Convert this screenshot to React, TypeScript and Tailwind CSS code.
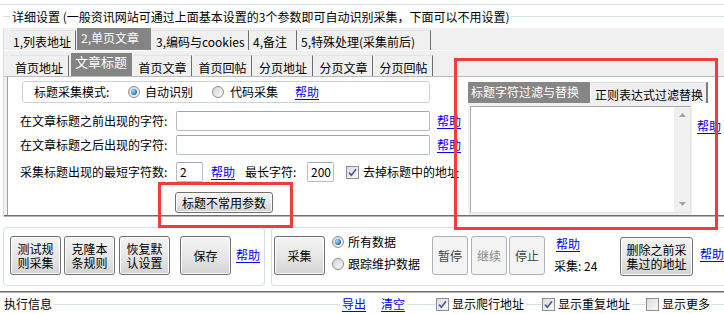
import React from "react";

function Link({ children, className = "" }: { children: React.ReactNode; className?: string }) {
  return <span className={`whitespace-nowrap text-[#0000ff] underline underline-offset-[2px] ${className}`}>{children}</span>;
}

function Btn({ children, className = "" }: { children: React.ReactNode; className?: string }) {
  return (
    <div
      className={`flex shrink-0 items-center justify-center rounded-[3px] border border-[#707070] bg-linear-to-b from-[#f4f4f4] via-[#e8e8e8] to-[#d3d3d3] text-center leading-[14px] shadow-[inset_0_0_0_1px_#fcfcfc] ${className}`}
    >
      {children}
    </div>
  );
}

function DimBtn({ children, className = "" }: { children: React.ReactNode; className?: string }) {
  return (
    <div
      className={`flex shrink-0 items-center justify-center rounded-[3px] border border-[#adb2b5] bg-[#f4f4f4] text-center ${className}`}
    >
      {children}
    </div>
  );
}

function Radio({ on }: { on?: boolean }) {
  return (
    <div className="flex h-[12px] w-[12px] shrink-0 items-center justify-center rounded-full border border-[#8e8f8f] bg-linear-to-br from-[#d4d4d4] to-[#fbfbfb]">
      {on && <div className="h-[6px] w-[6px] rounded-full bg-[radial-gradient(circle_at_35%_35%,#a8e0ff,#1a6fb7_70%)]" />}
    </div>
  );
}

function Check({ on }: { on?: boolean }) {
  return (
    <div className="flex h-[13px] w-[13px] shrink-0 items-center justify-center border border-[#8e8f8f] bg-linear-to-br from-[#dcdcdc] to-[#fafafa]">
      {on && (
        <svg width="9" height="9" viewBox="0 0 9 9">
          <path d="M1 4.6 L3.4 7.2 L8 1.2" stroke="#4a5f97" strokeWidth="1.7" fill="none" />
        </svg>
      )}
    </div>
  );
}

function Input({ className = "", children }: { className?: string; children?: React.ReactNode }) {
  return (
    <div
      className={`flex shrink-0 items-center rounded-[2px] border border-[#b4bcc6] border-t-[#9ba6b2] bg-white pl-[3px] ${className}`}
    >
      {children}
    </div>
  );
}

function Line({ className = "" }: { className?: string }) {
  return <div className={`h-px bg-[#d5dfe5] ${className}`} />;
}

export default function App() {
  return (
    <div className="relative h-[314px] w-[724px] overflow-hidden bg-white font-['Noto_Sans_CJK_SC','Noto_Sans',sans-serif] text-[12px] leading-[14px] text-black">
      {/* top edge */}
      <div className="h-[5px] border-b border-[#dbe1e8]" />

      {/* group title */}
      <div className="flex h-[23px] items-center">
        <Line className="ml-[3px] w-[7px]" />
        <span className="whitespace-nowrap px-[2px]">
          详细设置 (一般资讯网站可通过上面基本设置的3个参数即可自动识别采集，下面可以不用设置)
        </span>
        <Line className="flex-1" />
      </div>

      {/* body */}
      <div className="ml-[3px] border-l border-[#d5dfe5]">
        {/* outer tabs */}
        <div className="flex h-[23px] items-end border-b border-white bg-[#f0f0f0] pl-[6px]">
          <div className="flex h-[20px] w-[66px] items-center whitespace-nowrap border-r border-t border-r-[#6d6d6d] border-t-[#e3e3e3] pl-[3px] pt-[3px]">1,列表地址</div>
          <div className="ml-px flex h-[22px] w-[74px] items-start whitespace-nowrap bg-[#848484] pl-[4px] pt-[3px] text-white">2,单页文章</div>
          <div className="ml-px flex h-[20px] w-[97px] items-center whitespace-nowrap border-r border-t border-r-[#6d6d6d] border-t-[#e3e3e3] pl-[4px] pt-[3px]">3,编码与cookies</div>
          <div className="ml-px flex h-[20px] w-[47px] items-center whitespace-nowrap border-r border-t border-r-[#6d6d6d] border-t-[#e3e3e3] pl-[3px] pt-[3px]">4,备注</div>
          <div className="ml-px flex h-[20px] w-[133px] items-center whitespace-nowrap border-r border-t border-r-[#6d6d6d] border-t-[#e3e3e3] pl-[3px] pt-[3px]">5,特殊处理(采集前后)</div>
        </div>

        {/* inner tabs */}
        <div className="flex h-[26px] items-end border-b border-[#b9b9b9] bg-[#f0f0f0] pl-[6px]">
          <div className="flex h-[21px] w-[59px] items-center justify-center border-r border-t border-r-[#6d6d6d] border-t-[#e3e3e3] pt-[3px]">首页地址</div>
          <div className="ml-[2px] flex h-[23px] w-[61px] items-start bg-[#848484] pl-[4px] pt-[2px] text-[13px] text-white">文章标题</div>
          <div className="ml-[2px] flex h-[21px] w-[58px] items-center justify-center border-r border-t border-r-[#6d6d6d] border-t-[#e3e3e3] pt-[3px]">首页文章</div>
          <div className="ml-[2px] flex h-[21px] w-[58px] items-center justify-center border-r border-t border-r-[#6d6d6d] border-t-[#e3e3e3] pt-[3px]">首页回帖</div>
          <div className="ml-[2px] flex h-[21px] w-[59px] items-center justify-center border-r border-t border-r-[#6d6d6d] border-t-[#e3e3e3] pt-[3px]">分页地址</div>
          <div className="ml-[2px] flex h-[21px] w-[58px] items-center justify-center border-r border-t border-r-[#6d6d6d] border-t-[#e3e3e3] pt-[3px]">分页文章</div>
          <div className="ml-[2px] flex h-[21px] w-[58px] items-center justify-center border-r border-t border-r-[#6d6d6d] border-t-[#e3e3e3] pt-[3px]">分页回帖</div>
        </div>

        {/* content */}
        <div className="flex h-[138px] bg-[#f0f0f0] pl-[3px]">
          <div className="flex flex-1 border-l border-[#a0a0a0] bg-white">
            {/* left column */}
            <div className="flex w-[460px] shrink-0 flex-col">
              <div className="ml-[14px] mt-[4px] flex h-[22px] w-[408px] items-center rounded-[3px] border border-[#cdd2d8] pl-[11px]">
                <span className="w-[94px] shrink-0">标题采集模式:</span>
                <Radio on />
                <span className="ml-[5px]">自动识别</span>
                <div className="ml-[19px]">
                  <Radio />
                </div>
                <span className="ml-[6px]">代码采集</span>
                <Link className="ml-[17px]">帮助</Link>
              </div>

              <div className="ml-[12px] mt-[8px] flex h-[20px] items-center">
                <span className="w-[156px] shrink-0 whitespace-nowrap">在文章标题之前出现的字符:</span>
                <Input className="h-[20px] w-[254px]" />
                <Link className="ml-[7px]">帮助</Link>
              </div>
              <div className="ml-[12px] mt-[4px] flex h-[20px] items-center">
                <span className="w-[156px] shrink-0 whitespace-nowrap">在文章标题之后出现的字符:</span>
                <Input className="h-[20px] w-[254px]" />
                <Link className="ml-[7px]">帮助</Link>
              </div>
              <div className="ml-[12px] mt-[7px] flex h-[20px] items-center">
                <span className="w-[156px] shrink-0 whitespace-nowrap">采集标题出现的最短字符数:</span>
                <Input className="h-[20px] w-[27px]">2</Input>
                <Link className="ml-[8px]">帮助</Link>
                <span className="ml-[10px] w-[62px] shrink-0">最长字符:</span>
                <Input className="h-[20px] w-[27px]">200</Input>
                <div className="ml-[12px]">
                  <Check on />
                </div>
                <span className="ml-[4px] whitespace-nowrap">去掉标题中的地址</span>
              </div>
              <div className="ml-[167px] mt-[10px] flex">
                <Btn className="h-[21px] w-[98px]">标题不常用参数</Btn>
              </div>
            </div>

            {/* right column */}
            <div className="flex flex-col pt-[5px]">
              <div className="flex h-[21px] w-max">
                <div className="flex w-[122px] items-start whitespace-nowrap bg-[#868686] pl-[3px] pt-[3px] text-white">标题字符过滤与替换</div>
                <div className="ml-px flex w-[117px] items-center whitespace-nowrap border-r-2 border-t border-r-[#7a7a7a] border-t-[#dcdcdc] bg-[#f0f0f0] pl-[4px] pt-[4px]">正则表达式过滤替换</div>
              </div>
              <div className="flex">
                <div className="h-[112px] w-[224px] shrink-0 bg-[#f0f0f0] pb-[2px] pl-[2px] pr-[1px] pt-[3px]">
                  <div className="flex h-full justify-end border border-[#a9a9a9] border-b-[#e4e4e4] border-r-[#e4e4e4] bg-white">
                    <div className="flex w-[16px] flex-col items-center justify-between bg-[#f0f0f0] py-[6px]">
                      <svg width="7" height="4" viewBox="0 0 7 4">
                        <path d="M0 4 L3.5 0 L7 4 Z" fill="#a3a3a3" />
                      </svg>
                      <svg width="7" height="4" viewBox="0 0 7 4">
                        <path d="M0 0 L3.5 4 L7 0 Z" fill="#a3a3a3" />
                      </svg>
                    </div>
                  </div>
                </div>
                <Link className="ml-[5px] mt-[16px]">帮助</Link>
              </div>
            </div>
          </div>
        </div>
        <div className="h-px bg-[#6f6f6f]" />
        <div className="h-px bg-[#b5b5b5]" />
      </div>

      {/* bottom groups */}
      <div className="mt-[10px] flex h-[59px]">
        <div className="ml-[3px] flex w-[262px] shrink-0 items-start rounded-[4px] border border-[#d5dfe5] pl-[6px] pt-[8px]">
          <Btn className="h-[39px] w-[51px]">
            测试规
            <br />
            则采集
          </Btn>
          <Btn className="ml-[3px] h-[39px] w-[51px]">
            克隆本
            <br />
            条规则
          </Btn>
          <Btn className="ml-[4px] h-[39px] w-[51px]">
            恢复默
            <br />
            认设置
          </Btn>
          <Btn className="ml-[10px] h-[39px] w-[51px]">保存</Btn>
          <Link className="ml-[5px] mt-[12px]">帮助</Link>
        </div>
        <div className="ml-[6px] flex flex-1 items-start rounded-l-[4px] border border-r-0 border-[#d5dfe5] pl-[2px] pt-[8px]">
          <Btn className="h-[39px] w-[51px]">采集</Btn>
          <div className="ml-[7px] mt-[-1px] flex w-[100px] flex-col gap-[8px]">
            <div className="flex h-[14px] items-center">
              <Radio on />
              <span className="ml-[4px]">所有数据</span>
            </div>
            <div className="flex h-[14px] items-center">
              <Radio />
              <span className="ml-[4px]">跟踪维护数据</span>
            </div>
          </div>
          <DimBtn className="h-[39px] w-[36px] text-[#444]">暂停</DimBtn>
          <DimBtn className="ml-[3px] h-[39px] w-[36px] text-[#8a8a8a]">继续</DimBtn>
          <DimBtn className="ml-[2px] h-[39px] w-[36px] text-[#444]">停止</DimBtn>
          <div className="ml-[9px] flex w-[66px] flex-col">
            <Link className="ml-[2px] mt-[1px]">帮助</Link>
            <span className="mt-[8px] whitespace-nowrap">采集: 24</span>
          </div>
          <Btn className="mt-[1px] h-[39px] w-[73px] border-[#555]">
            删除之前采
            <br />
            集过的地址
          </Btn>
          <Link className="ml-[7px] mt-[11px]">帮助</Link>
        </div>
      </div>

      {/* splitter */}
      <div className="mt-[5px] h-px bg-[#6f6f6f]" />
      <div className="h-px bg-[#b5b5b5]" />

      {/* bottom bar */}
      <div className="flex h-[22px] items-center">
        <span className="ml-[4px] whitespace-nowrap">执行信息</span>
        <Line className="ml-[2px] flex-1" />
        <Link className="ml-[2px]">导出</Link>
        <Link className="ml-[15px]">清空</Link>
        <Line className="ml-[2px] w-[28px]" />
        <div className="ml-px">
          <Check on />
        </div>
        <span className="ml-[3px] whitespace-nowrap">显示爬行地址</span>
        <Line className="ml-[2px] w-[15px]" />
        <div className="ml-px">
          <Check on />
        </div>
        <span className="ml-[3px] whitespace-nowrap">显示重复地址</span>
        <Line className="ml-[2px] w-[13px]" />
        <div className="ml-px">
          <Check />
        </div>
        <span className="ml-[3px] whitespace-nowrap">显示更多</span>
        <Line className="ml-[2px] w-[12px]" />
      </div>

      {/* red annotation boxes */}
      <div className="pointer-events-none absolute left-[454px] top-[58px] h-[172px] w-[264px] border-[3px] border-[#f03c3c]" />
      <div className="pointer-events-none absolute left-[158px] top-[182px] h-[46px] w-[135px] border-[3px] border-[#f03c3c]" />
    </div>
  );
}
